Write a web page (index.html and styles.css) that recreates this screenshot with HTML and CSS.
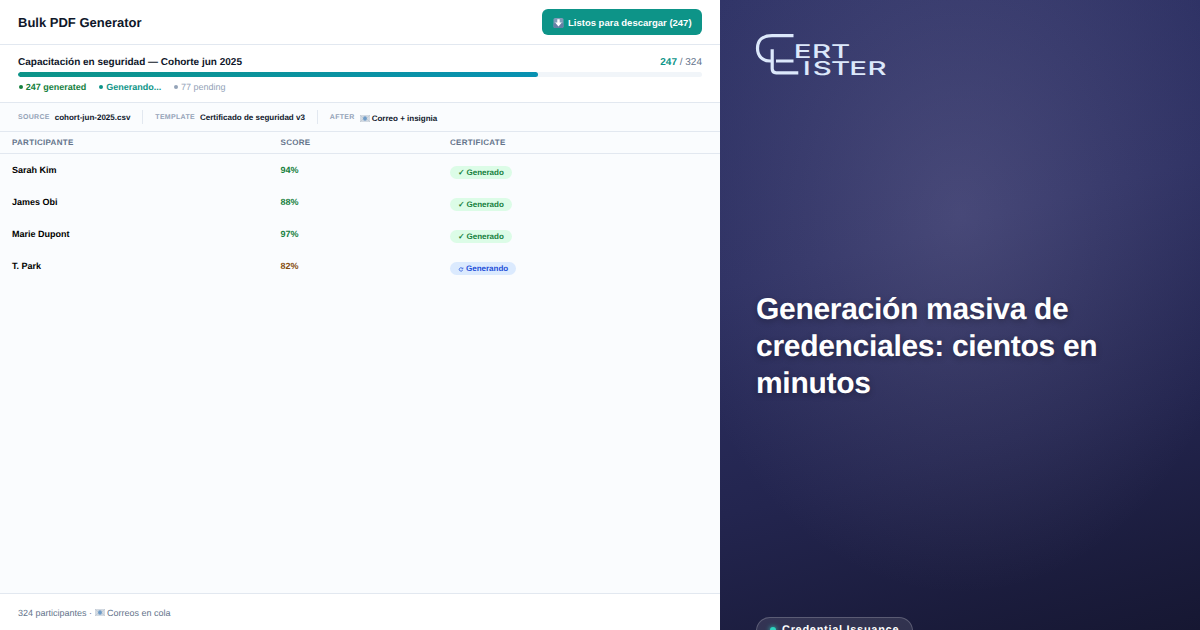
FILE: index.html
```html
<!DOCTYPE html>
<html lang="es">
<head>
    <meta charset="UTF-8">
    <meta name="viewport" content="width=device-width, initial-scale=1.0">
    <title>Bulk PDF Generator</title>
    <link rel="stylesheet" href="styles.css">
</head>
<body>

    <div class="app">
        <div class="topbar">
            <h1>Bulk PDF Generator</h1>
            <button class="download">
                <svg class="down-icon" viewBox="0 0 10 10">
                    <rect width="10" height="10" rx="1.6" fill="#7f9ab8"/>
                    <rect y="5" width="10" height="5" rx="1.6" fill="#667fa5"/>
                    <path d="M3.8 1.2h2.4v3.4h2.2L5 8.6 1.6 4.6h2.2z" fill="#fff"/>
                </svg>
                Listos para descargar (247)
            </button>
        </div>

        <div class="progress">
            <div class="progress-head">
                <strong>Capacitación en seguridad — Cohorte jun 2025</strong>
                <span class="count"><b>247</b> / 324</span>
            </div>
            <div class="bar"><div class="bar-fill" style="width: 76%"></div></div>
            <div class="legend">
                <span class="done"><i></i>247 generated</span>
                <span class="working"><i></i>Generando...</span>
                <span class="pending"><i></i>77 pending</span>
            </div>
        </div>

        <div class="meta">
            <div class="meta-item"><span class="label">SOURCE</span><b>cohort-jun-2025.csv</b></div>
            <div class="meta-item"><span class="label">TEMPLATE</span><b>Certificado de seguridad v3</b></div>
            <div class="meta-item after">
                <span class="label">AFTER</span>
                <svg class="mail-icon" viewBox="0 0 10 7">
                    <rect width="10" height="7" fill="#d3dae2"/>
                    <path d="M0 0l3.5 3.5L0 7M10 0L6.5 3.5 10 7" fill="none" stroke="#b5bec9" stroke-width=".5"/>
                    <ellipse cx="5" cy="3.5" rx="1.9" ry="2.3" fill="#6f9cc8"/>
                </svg>
                <b>Correo + insignia</b>
            </div>
        </div>

        <table>
            <thead>
                <tr>
                    <th class="col-name">PARTICIPANTE</th>
                    <th class="col-score">SCORE</th>
                    <th>CERTIFICATE</th>
                </tr>
            </thead>
            <tbody>
                <tr>
                    <td>Sarah Kim</td>
                    <td class="high">94%</td>
                    <td><span class="badge ok"><span class="check">✓</span>Generado</span></td>
                </tr>
                <tr>
                    <td>James Obi</td>
                    <td class="high">88%</td>
                    <td><span class="badge ok"><span class="check">✓</span>Generado</span></td>
                </tr>
                <tr>
                    <td>Marie Dupont</td>
                    <td class="high">97%</td>
                    <td><span class="badge ok"><span class="check">✓</span>Generado</span></td>
                </tr>
                <tr>
                    <td>T. Park</td>
                    <td class="mid">82%</td>
                    <td>
                        <span class="badge run">
                            <svg class="spin-icon" viewBox="0 0 6 6">
                                <path d="M4.3 2.4A1.7 1.7 0 1 0 4.6 3.9M4.9 1.5v1.3H3.6" fill="none" stroke="#1d4ed8" stroke-width=".7"/>
                            </svg>Generando
                        </span>
                    </td>
                </tr>
            </tbody>
        </table>

        <div class="footer">
            324 participantes ·
            <svg class="mail-icon" viewBox="0 0 10 7">
                <rect width="10" height="7" fill="#d3dae2"/>
                <path d="M0 0l3.5 3.5L0 7M10 0L6.5 3.5 10 7" fill="none" stroke="#b5bec9" stroke-width=".5"/>
                <ellipse cx="5" cy="3.5" rx="1.9" ry="2.3" fill="#6f9cc8"/>
            </svg>
            Correos en cola
        </div>
    </div>

    <div class="promo">
        <svg class="logo" viewBox="0 0 132 44" width="132" height="44">
            <g fill="none" stroke="#dce8fb" stroke-width="3.2">
                <path d="M37.5 2.6H16C6.5 2.6 1.5 7.5 1.5 15.3S6.5 28 14.5 28h2M20 28h17.5"/>
                <path d="M16.2 16.3v19.5q0 4 4 4h22.1"/>
            </g>
            <g class="wordmark" transform="scale(1.55 1)">
                <text y="24.6" x="24.3 36.2 48.4">ERT</text>
                <text y="41.7" x="30.1 36.6 48.4 60.1 72">ISTER</text>
            </g>
        </svg>
        <h2>Generación masiva de credenciales: cientos en minutos</h2>
        <div class="pill"><i></i>Credential Issuance</div>
    </div>

</body>
</html>
```

FILE: styles.css
```css
* {
    box-sizing: border-box;
}

body {
    margin: 0;
    width: 1200px;
    height: 630px;
    display: flex;
    overflow: hidden;
    font-family: 'Liberation Sans', Arial, sans-serif;
    text-rendering: geometricPrecision;
    color: #0f172a;
}

.app {
    width: 720px;
    height: 630px;
    display: flex;
    flex-direction: column;
    background: #fafcfe;
}

.topbar {
    height: 45px;
    display: flex;
    align-items: center;
    justify-content: space-between;
    padding: 0 18px;
    background: #fff;
    border-bottom: 1px solid #e2e8f0;
}

h1 {
    margin: 0;
    font-size: 13px;
}

.download {
    display: flex;
    align-items: center;
    gap: 4px;
    width: 160px;
    height: 26px;
    padding: 1px 0 0 11px;
    border: none;
    border-radius: 6px;
    background: #0d9488;
    color: #fff;
    font: bold 9.5px 'Liberation Sans', Arial, sans-serif;
    white-space: nowrap;
}

.down-icon {
    width: 11px;
    height: 10px;
}

.progress {
    height: 58px;
    padding: 12px 18px 0;
    background: #fff;
    border-bottom: 1px solid #e2e8f0;
}

.progress-head {
    display: flex;
    justify-content: space-between;
    font-size: 10px;
    line-height: 12px;
    margin-bottom: 3px;
}

.count {
    color: #64748b;
}

.count b {
    color: #0d9488;
}

.bar {
    height: 5px;
    border-radius: 3px;
    background: #f1f5f9;
    overflow: hidden;
}

.bar-fill {
    height: 5px;
    border-radius: 3px;
    background: linear-gradient(90deg, #0d9488, #0891b2);
}

.legend {
    display: flex;
    gap: 12px;
    margin-top: 5px;
    font-size: 9px;
    line-height: 11px;
}

.legend i {
    display: inline-block;
    width: 4px;
    height: 4px;
    margin: 0 3.3px 1px 0.5px;
    border-radius: 50%;
    background: currentColor;
}

.done {
    color: #15803d;
    font-weight: bold;
}

.working {
    color: #0d9488;
    font-weight: bold;
}

.pending {
    color: #94a3b8;
}

.meta {
    height: 29px;
    display: flex;
    align-items: center;
    padding: 0 18px;
    border-bottom: 1px solid #e2e8f0;
    font-size: 8px;
}

.meta-item {
    display: flex;
    align-items: center;
    height: 14px;
    padding-right: 12px;
    margin-right: 12px;
    border-right: 1px solid #e2e8f0;
}

.meta-item:last-child {
    border: none;
}

.label {
    margin-right: 5px;
    color: #94a3b8;
    font-size: 7px;
    font-weight: bold;
    letter-spacing: 0.3px;
}

.after b,
.after .mail-icon {
    margin-top: 2px;
}

.mail-icon {
    width: 10px;
    height: 7px;
}

.after .mail-icon {
    margin-right: 2px;
}

table {
    width: 100%;
    border-collapse: separate;
    border-spacing: 0;
    table-layout: fixed;
}

th {
    height: 22px;
    padding: 0 12px;
    border-bottom: 1px solid #e2e8f0;
    color: #64748b;
    font-size: 8px;
    letter-spacing: 0.3px;
    text-align: left;
}

.col-name {
    width: 268.5px;
}

.col-score {
    width: 169.5px;
}

td {
    height: 32px;
    padding: 0 12px;
    color: #000;
    font-size: 9px;
    font-weight: bold;
}

.high {
    color: #15803d;
}

.mid {
    color: #854d0e;
}

.badge {
    display: inline-flex;
    align-items: center;
    height: 13px;
    margin-top: 5px;
    padding: 0 8px;
    border-radius: 7px;
    font-size: 8px;
    vertical-align: top;
}

.ok {
    background: #dcfce7;
    color: #15803d;
}

.check {
    width: 8.5px;
}

.run {
    background: #dbeafe;
    color: #1d4ed8;
}

.spin-icon {
    width: 6px;
    height: 6px;
    margin-right: 2px;
}

.footer {
    display: flex;
    align-items: center;
    gap: 2.5px;
    height: 37px;
    margin-top: auto;
    padding: 1px 18px 0;
    background: #fff;
    border-top: 1px solid #e2e8f0;
    color: #64748b;
    font-size: 9px;
}

.promo {
    width: 480px;
    height: 630px;
    padding: 33px 36px 0;
    background:
        radial-gradient(ellipse 290px 380px at 50% 34%, rgba(150, 145, 185, 0.25), rgba(150, 145, 185, 0.12) 50%, transparent),
        linear-gradient(165deg, #313568 0%, #2d3062 38%, #23254f 68%, #161732 100%);
}

.logo {
    display: block;
    overflow: visible;
}

.wordmark text {
    fill: #dce8fb;
    font-family: Inter, sans-serif;
    font-size: 19px;
    font-weight: 500;
}

h2 {
    margin: 214px 0 0;
    width: 380px;
    color: #fff;
    font-size: 30px;
    line-height: 37px;
    letter-spacing: -0.3px;
    text-shadow: 0 2px 6px rgba(0, 0, 0, 0.3);
}

.pill {
    display: flex;
    align-items: center;
    width: 157px;
    height: 28px;
    margin-top: 215px;
    padding: 0 0 2px 13px;
    border: 1px solid rgba(255, 255, 255, 0.2);
    border-radius: 14px;
    background: rgba(255, 255, 255, 0.1);
    color: #fff;
    font-size: 11px;
    font-weight: bold;
    letter-spacing: 0.7px;
    white-space: nowrap;
}

.pill i {
    width: 6px;
    height: 6px;
    margin-right: 6px;
    border-radius: 50%;
    background: #2dd4bf;
    box-shadow: 0 0 5px #2dd4bf;
}
```
